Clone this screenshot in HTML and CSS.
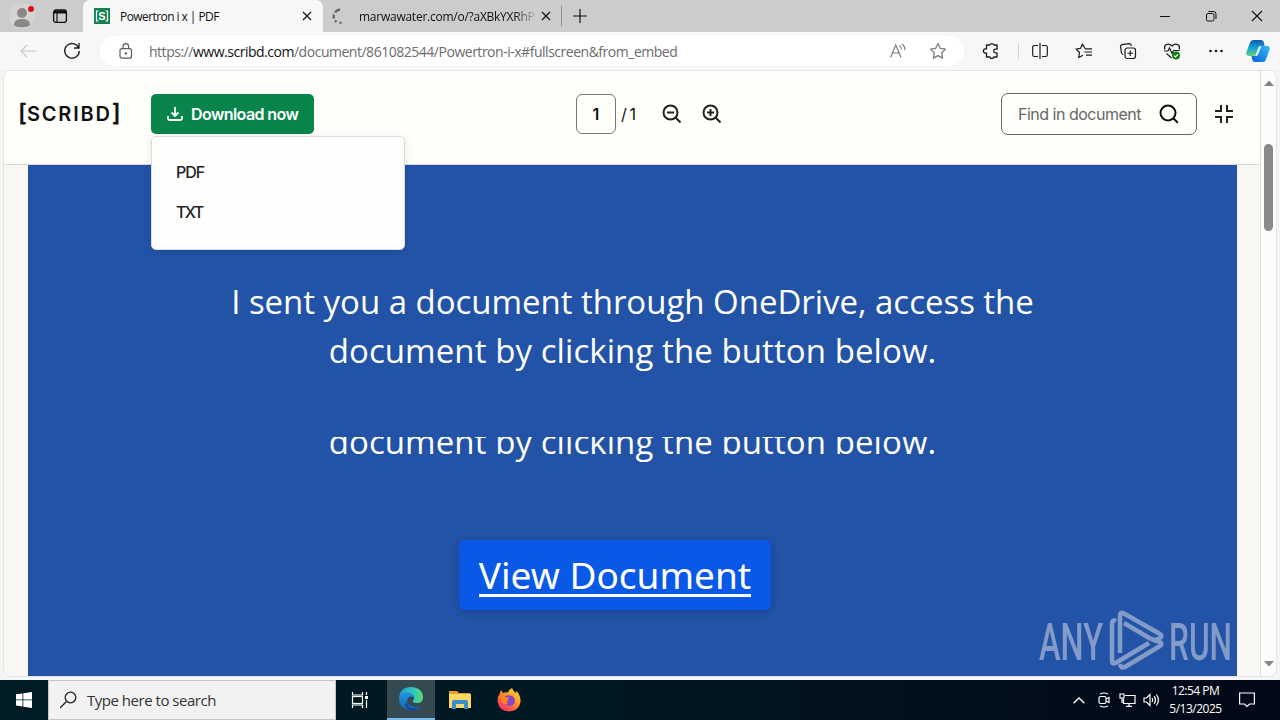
FILE: index.html
```html
<!DOCTYPE html>
<html lang="en">

<head>
    <meta charset="UTF-8">
    <title>Powertron i x | PDF</title>
    <link rel="stylesheet" href="styles.css">
</head>

<body>
    <!-- browser tabs -->
    <div class="tabs">
        <div class="tabs-left">
            <svg class="profile" width="28" height="30" viewBox="0 0 28 30">
                <circle cx="13" cy="15" r="13" fill="#d5d4d3"/>
                <circle cx="13" cy="12" r="5" fill="#8b8784"/>
                <path d="M5 24c0-4 3-6 8-6s8 2 8 6c-2 3-14 3-16 0z" fill="#8b8784"/>
                <circle cx="22" cy="8" r="3" fill="#e00b1c"/>
            </svg>
            <svg class="workspaces" width="16" height="16" viewBox="0 0 16 16" fill="none" stroke="#111">
                <rect x="1.6" y="2" width="12.8" height="12.4" rx="2.5" stroke-width="1.3"/>
                <path d="M2 4h12" stroke-width="3"/>
                <path d="M5 4v10" stroke-width="1.2"/>
            </svg>
        </div>
        <div class="tab active">
            <svg width="16" height="16" viewBox="0 0 16 16">
                <rect width="16" height="16" fill="#12834f"/>
                <path d="M4.500 3H2.500v10h2M11.500 3h2v10h-2" fill="none" stroke="#fff" stroke-width="1.2"/>
                <text x="8" y="12" text-anchor="middle" class="favicon-letter">S</text>
            </svg>
            <span class="tab-title title-one">Powertron i x | PDF</span>
            <svg class="tab-close" width="10" height="10" viewBox="0 0 10 10"><path d="M1 1l8 8M9 1l-8 8" stroke="#111" stroke-width="1.2"/></svg>
        </div>
        <div class="tab loading">
            <svg width="16" height="16" viewBox="0 0 16 16" fill="none" stroke="#666" stroke-width="2.400">
                <path d="M9 1.500Q5.500 2 4 4.500M3 6.500Q2.200 8 3 10.500"/>
                <path d="M4 12.500l1.500 1.500M8.500 15h2"/>
            </svg>
            <span class="tab-title title-two">marwawater.com/o/?aXBkYXRhP</span>
            <svg class="tab-close" width="10" height="10" viewBox="0 0 10 10"><path d="M1 1l8 8M9 1l-8 8" stroke="#111" stroke-width="1.2"/></svg>
        </div>
        <svg class="new-tab" width="14" height="14" viewBox="0 0 14 14"><path d="M7 0v14M0 7h14" stroke="#111" stroke-width="1.2"/></svg>
        <div class="window-buttons">
            <svg width="46" height="32" viewBox="0 0 46 32"><path d="M18 16.500h10" stroke="#111"/></svg>
            <svg width="46" height="32" viewBox="0 0 46 32" fill="none" stroke="#111"><rect x="18.500" y="13.500" width="7.500" height="7.500" rx="1.500"/><path d="M20.500 11.500h5q2.500 0 2.500 2.500v5"/></svg>
            <svg width="46" height="32" viewBox="0 0 46 32"><path d="M18 11l10 10M28 11L18 21" stroke="#111" stroke-width="1.1"/></svg>
        </div>
    </div>

    <!-- address bar -->
    <div class="toolbar">
        <svg class="back" width="18" height="14" viewBox="0 0 18 14" fill="none" stroke="#c8c8c8" stroke-width="1.2"><path d="M16 7H1M7 1L1 7l6 6"/></svg>
        <svg class="reload" width="18" height="18" viewBox="0 0 18 18" fill="none" stroke="#1b1b1b" stroke-width="1.300"><path d="M15.500 5.500A7.300 7.300 0 1 0 16.300 9M16 1v5h-5"/></svg>
        <div class="address">
            <svg width="14" height="16" viewBox="0 0 14 16" fill="none" stroke="#5c5c5c" stroke-width="1.2"><rect x="1" y="5.600" width="11.500" height="9.600" rx="2"/><path d="M4 5.500V3.500a2.800 2.800 0 0 1 5.600 0v2"/><circle cx="6.800" cy="10.400" r=".6" fill="#5c5c5c"/></svg>
            <span class="url">https://<b>www.scribd.com</b>/document/861082544/Powertron-i-x#fullscreen&amp;from_embed</span>
            <svg class="read-aloud" width="18" height="18" viewBox="0 0 18 18" fill="none" stroke="#777" stroke-width="1.1"><path d="M1.500 15.500L6.800 3l5.200 12.500M3.400 11h7M10.500 3.500q2 1.500 2 4M13 2q3 2 3 6"/></svg>
            <svg class="star" width="18" height="18" viewBox="0 0 18 18" fill="none" stroke="#777" stroke-width="1.2" stroke-linejoin="round"><path d="M9 1.500l2.300 4.800 5.200.8-3.800 3.700.9 5.300L9 13.600l-4.600 2.500.9-5.300L1.500 7.100l5.200-.8z"/></svg>
        </div>
        <div class="actions">
            <svg width="18" height="18" viewBox="0 0 18 18" fill="none" stroke="#1b1b1b" stroke-width="1.300" stroke-linejoin="round"><path d="M4.500 3h3.300a2.200 2.200 0 0 1 4 0H15v4.200h-1.500a1.800 1.800 0 0 0 0 3.600H15V15h-3.200a2 2 0 0 1-3.900 0H4.500v-4a2.200 2.200 0 1 1 0-4z"/></svg>
            <i class="separator"></i>
            <svg width="18" height="18" viewBox="0 0 18 18" fill="none" stroke="#1b1b1b" stroke-width="1.200"><path d="M9 1v16M7 3.500H3.500Q1.700 3.500 1.700 5.300v7.400q0 1.800 1.800 1.800H7M11 3.500h3.500q1.800 0 1.800 1.800v7.400q0 1.800-1.800 1.800H11"/></svg>
            <svg width="18" height="18" viewBox="0 0 18 18" fill="none" stroke="#1b1b1b" stroke-width="1.200" stroke-linejoin="round"><path d="M10 6.500L7.500 2 5.600 6.300 1 7l3.500 3.500L3.700 15.500 8 13.200M10 6.800h7M9.500 10h7.500M11 13.200h6"/></svg>
            <svg width="18" height="18" viewBox="0 0 18 18" fill="none" stroke="#1b1b1b" stroke-width="1.200"><rect x="6" y="6" width="10.500" height="10.500" rx="2.200"/><path d="M11.250 8.500v5.500M8.500 11.250H14M4 12.500Q2.700 12 2.400 10.500L1.500 4.500Q1.300 3 3 2.600L10 1.600q1.500 0 2 1.200l.3 1.200"/></svg>
            <svg width="18" height="18" viewBox="0 0 18 18" fill="none" stroke="#1b1b1b" stroke-width="1.200"><path d="M1.800 7.500Q.8 4.500 3 2.800 6 1 9 4q3-3 6-1.200 2.200 1.700 1.200 4.700M1 9h4l1.500-3L9 11.500l1.700-3h5.800M3.500 11.500L8.500 16"/><circle cx="13" cy="13.500" r="4" fill="#14801b" stroke="none"/><path d="M11 13.600l1.400 1.300 2.600-2.600" stroke="#fff"/></svg>
            <svg width="18" height="18" viewBox="0 0 18 18" fill="#1b1b1b"><circle cx="3.500" cy="9" r="1.300"/><circle cx="9" cy="9" r="1.300"/><circle cx="14.500" cy="9" r="1.300"/></svg>
        </div>
        <svg class="copilot" width="24" height="24" viewBox="0 0 24 24">
            <defs>
                <linearGradient id="cop-a" x1="0" y1="0" x2="0" y2="1"><stop offset="0" stop-color="#1558ae"/><stop offset=".5" stop-color="#10a5dc"/><stop offset="1" stop-color="#65cf75"/></linearGradient>
                <linearGradient id="cop-b" x1="1" y1="0" x2="0" y2="1"><stop offset="0" stop-color="#35bdf5"/><stop offset="1" stop-color="#0861d9"/></linearGradient>
            </defs>
            <path d="M7 1h8q2 0 2.700 2l1 4h-4q-2 0-2.600 2l-2 6q-.6 2-2.600 2H3Q-.5 17 .5 13L4 3.500Q5 1 7 1z" fill="url(#cop-a)"/>
            <path d="M17 23H9q-2 0-2.700-2L5.500 17h3q2 0 2.600-2l2-6q.6-2 2.600-2H21q3.500 0 2.500 4L20 20.500Q19 23 17 23z" fill="url(#cop-b)"/>
            <path d="M13 8.500q.7-1.500 2.500-1.500L12 15.500Q11.300 17 9.500 17z" fill="#f4fbff"/>
        </svg>
    </div>

    <!-- page -->
    <div class="frame">
        <div class="viewer">
            <header class="header">
                <div class="logo"><span>[</span>SCRIBD<span>]</span></div>
                <div class="download">
                    <button class="download-button">
                        <svg width="16" height="16" viewBox="0 0 16 16" fill="none" stroke="#fff" stroke-width="1.800"><path d="M8 1v8.500M4.500 6.500L8 10l3.500-3.500M1 10v2.500Q1 14 2.500 14h11q1.500 0 1.500-1.500V10"/></svg>
                        <span>Download now</span>
                    </button>
                    <ul class="menu">
                        <li>PDF</li>
                        <li class="txt">TXT</li>
                    </ul>
                </div>
                <div class="pager">
                    <div class="page-number">1</div>
                    <span class="page-total">/ 1</span>
                    <svg width="20" height="20" viewBox="0 0 20 20" fill="none" stroke="#222" stroke-width="2"><circle cx="8.500" cy="8.500" r="7"/><path d="M13.500 13.500l5 5M5 8.500h7"/></svg>
                    <svg width="20" height="20" viewBox="0 0 20 20" fill="none" stroke="#222" stroke-width="2"><circle cx="8.500" cy="8.500" r="7"/><path d="M13.500 13.500l5 5M5 8.500h7M8.500 5v7"/></svg>
                </div>
                <div class="find">
                    <span>Find in document</span>
                    <svg width="20" height="20" viewBox="0 0 20 20" fill="none" stroke="#111" stroke-width="2"><circle cx="9" cy="9" r="7.500"/><path d="M14.300 14.300l4.500 4.500"/></svg>
                </div>
                <svg class="exit-full" width="20" height="20" viewBox="0 0 20 20" fill="none" stroke="#222" stroke-width="2"><path d="M1 7h6V1M13 1v6h6M1 13h6v6M13 19v-6h6"/></svg>
            </header>
            <main class="sheet">
                <p class="message line-one">I sent you a document through OneDrive, access the</p>
                <p class="message line-two">document by clicking the button below.</p>
                <div class="repeat"><p class="message line-two">document by clicking the button below.</p></div>
                <a class="view-button"><span>View Document</span></a>
            </main>
        </div>
        <div class="scrollbar">
            <svg width="10" height="6" viewBox="0 0 10 6"><path d="M0 6l5-5.500L10 6z" fill="#858585"/></svg>
            <div class="thumb"></div>
            <svg class="down" width="10" height="6" viewBox="0 0 10 6"><path d="M0 0l5 5.500L10 0z" fill="#858585"/></svg>
        </div>
    </div>

    <!-- taskbar -->
    <div class="taskbar">
        <div class="task start">
            <svg width="16" height="16" viewBox="0 0 16 16" fill="#fff"><path d="M0 2.300l6.500-.9v6.100H0zM7.300 1.300L16 0v7.500H7.300zM0 8.300h6.500v6.200L0 13.600zM7.300 8.300H16V16l-8.700-1.300z"/></svg>
        </div>
        <div class="search">
            <svg width="18" height="18" viewBox="0 0 18 18" fill="none" stroke="#222" stroke-width="1.300"><circle cx="10.500" cy="6.500" r="5.300"/><path d="M6.500 10.500L0 17"/></svg>
            <span>Type here to search</span>
        </div>
        <div class="task view">
            <svg width="18" height="16" viewBox="0 0 18 16" fill="none" stroke="#fff" stroke-width="1.200"><path d="M1.500 0v3h10V0M1.500 16v-3h10v3M15.500 0v3M15.500 8v8"/><rect x="1.500" y="4.500" width="10" height="7"/><path d="M14 5.500h3" stroke-width="3"/></svg>
        </div>
        <div class="task current">
            <svg width="24" height="24" viewBox="0 0 24 24">
                <defs>
                    <linearGradient id="edge-a" x1="0" y1="0" x2="1" y2="0"><stop offset="0" stop-color="#199bd9"/><stop offset=".6" stop-color="#31c9c2"/><stop offset="1" stop-color="#5ddb68"/></linearGradient>
                    <linearGradient id="edge-b" x1="0" y1="0" x2="0" y2="1"><stop offset="0" stop-color="#2295df"/><stop offset="1" stop-color="#125eb1"/></linearGradient>
                </defs>
                <path d="M0 11Q1 0 12.500 0 24 1 24 10.500q0 5.500-6 5.500-5 0-4.200-2.500 2.200-2 .7-5Q10 4 4 7 1 8.500 0 11z" fill="url(#edge-a)"/>
                <path d="M0 12q0-6 7-6 8 0 8 5-1-2-3.500-1.500-4 1-3 5.500 1.500 6 11.500 4.500 2 0 .5 1.500Q17 25 9.500 23.500 0 21 0 12z" fill="url(#edge-b)"/>
                <path d="M8.500 13.500q-1 6.500 5 7.500 4 .5 7-1.300Q17 24.500 12 24q-6-1.500-5.800-6 .3-3 2.300-4.500z" fill="#164b8d"/>
            </svg>
        </div>
        <div class="task">
            <svg width="22" height="20" viewBox="0 0 22 20"><path d="M0 1h8l2 2h11v4H0z" fill="#e4a22c"/><path d="M0 4h22v14H0z" fill="#ffd767"/><path d="M3 19v-7q0-2 2-2h12q2 0 2 2v7h-4v-5H7v5z" fill="#348fcb"/><path d="M7 14h8v4H7z" fill="#fbd66b"/></svg>
        </div>
        <div class="task">
            <svg width="24" height="24" viewBox="0 0 24 24">
                <defs><linearGradient id="fox" x1="1" y1="0" x2=".2" y2="1"><stop offset="0" stop-color="#ffe63d"/><stop offset=".45" stop-color="#ff9a24"/><stop offset="1" stop-color="#f5246b"/></linearGradient></defs>
                <path d="M4 2l2 3q2-1 5-.5Q12 1 15 0q1 3 4 5l.5-2Q24 8 23.500 14 22 23 12 23.500 2 23 .7 14 0 9 2.500 6z" fill="url(#fox)"/>
                <path d="M7 10q1-3 5-2.700 6 .7 6 5.700-.5 4.500-5.500 5Q8 17.500 7.500 14q2 1 4.500-1-2-.3-2-2z" fill="#8547c9"/>
                <path d="M3 8q3-1 5 1l4 .5q-.5 2-2.500 2.500-1 3.500 2.500 4-5 1-7.500-3z" fill="#ff851e"/>
            </svg>
        </div>
        <div class="tray">
            <svg width="12" height="7" viewBox="0 0 12 7" fill="none" stroke="#fff" stroke-width="1.300"><path d="M.6 6.300L6 1l5.400 5.300"/></svg>
            <svg class="meet" width="12" height="16" viewBox="0 0 12 16" fill="none" stroke="#fff" stroke-width="1.200"><rect x="1" y="4.500" width="7" height="7" rx="1.500"/><path d="M8 7l3-1.500v5L8 9M2 2q4-2 8 0M2 14q4 2 8 0"/></svg>
            <svg class="network" width="17" height="14" viewBox="0 0 17 14" fill="none" stroke="#fff" stroke-width="1.200"><path d="M6 2.500h10v8H4.500V6M10 10.500v3M7 13.400h6M1 1h4v4H1zM3 5v5"/></svg>
            <svg class="volume" width="17" height="14" viewBox="0 0 17 14" fill="none" stroke="#fff" stroke-width="1.200"><path d="M1 5h2.500L7 1.500v11L3.500 9H1zM9 5q1.300 2 0 4M11.200 3.200q2.500 3.800 0 7.600M13.400 1.500q4 5.500 0 11"/></svg>
            <div class="clock"><span>12:54 PM</span><span>5/13/2025</span></div>
            <svg class="notes" width="16" height="16" viewBox="0 0 16 16" fill="none" stroke="#fff" stroke-width="1.200"><path d="M.6 1h14.800v11H10.500L8 14.500 5.500 12H.6z"/></svg>
        </div>
    </div>

    <svg class="watermark" width="204" height="70" viewBox="0 0 204 70">
        <text x="3" y="53" textLength="64" lengthAdjust="spacingAndGlyphs">ANY</text>
        <text x="133" y="53" textLength="63" lengthAdjust="spacingAndGlyphs">RUN</text>
        <g fill="none" stroke-width="4.500" stroke-linejoin="round">
            <path d="M84 46V9q0-5 4-2.500L124 27q3 2 0 4L119 33M88 16L115 32"/>
            <path d="M80 14q-4-2-4 3v37q0 3.500 3.500 2L113 36"/>
            <path d="M84 57q1 5 5 3L124 39q3-2 0-4L115 32"/>
        </g>
    </svg>
</body>

</html>
```
FILE: styles.css
```css
* {
    box-sizing: border-box;
}

body {
    font-family: 'Open Sans', sans-serif;
    background-color: #f5f5f5;
    color: #111111;
    margin: 0;
    height: 720px;
    overflow: hidden;
}

svg {
    display: block;
    flex-shrink: 0;
}

.tabs {
    display: flex;
    align-items: center;
    height: 32px;
    background-color: #cccccc;
}

.tabs-left {
    display: flex;
    align-items: center;
    width: 83px;
    padding-left: 9px;
    gap: 15px;
}

.tab {
    display: flex;
    align-items: center;
    height: 32px;
    font-size: 12px;
}

.tab.active {
    width: 240px;
    padding-left: 11px;
    background-color: #f7f7f7;
    border-radius: 7px 7px 0 0;
}

.tab.loading {
    width: 239px;
    padding-left: 8px;
    border-right: 1px solid #909090;
    height: 20px;
}

.favicon-letter {
    font: bold 11px 'Liberation Sans', sans-serif;
    fill: #ffffff;
}

.tab-title {
    margin-left: 10px;
    width: 182px;
    white-space: nowrap;
    overflow: hidden;
}

.title-one {
    letter-spacing: -0.57px;
}

.title-two {
    margin-left: 12px;
    width: 177px;
    letter-spacing: -0.25px;
    -webkit-mask-image: linear-gradient(90deg, #000 155px, transparent 179px);
}

.tab.loading .tab-close {
    margin-left: 5px;
}

.new-tab {
    margin-left: 11px;
}

.window-buttons {
    display: flex;
    margin-left: auto;
}

.toolbar {
    display: flex;
    align-items: center;
    height: 38px;
    padding-left: 20px;
    background-color: #f7f7f7;
}

.reload {
    margin-left: 25px;
}

.address {
    display: flex;
    align-items: center;
    width: 864px;
    height: 30px;
    margin-left: 19px;
    padding: 0 17px 0 19px;
    background-color: #ffffff;
    border-radius: 15px;
}

.url {
    margin-left: 16px;
    font-size: 14px;
    color: #6c6c6c;
    white-space: nowrap;
    letter-spacing: -0.48px;
}

.url b {
    font-weight: normal;
    color: #111111;
}

.read-aloud {
    margin-left: auto;
}

.star {
    margin-left: 22px;
}

.actions {
    display: flex;
    align-items: center;
    gap: 26px;
    margin-left: 18px;
}

.separator {
    width: 1px;
    height: 16px;
    margin: 0 -14px 0 -8px;
    background-color: #cfcfcf;
}

.copilot {
    margin-left: 21px;
}

.frame {
    display: flex;
    height: 607px;
    margin: 0 3px;
    border: 1px solid #e4e4e4;
    border-radius: 8px;
    overflow: hidden;
    background-color: #ffffff;
}

.viewer {
    flex: 1;
    background-color: #f8f7f4;
    border-right: 1px solid #dddddd;
}

.header {
    display: flex;
    align-items: center;
    height: 94px;
    padding: 0 26px 7px 14px;
    background-color: #fefefb;
    border-bottom: 1px solid #dad9d6;
}

.logo {
    display: flex;
    align-items: center;
    width: 133px;
    font: 600 20px 'Inter', sans-serif;
    letter-spacing: 1.8px;
}

.logo span {
    font-size: 24px;
    letter-spacing: 0;
    line-height: 24px;
    padding-bottom: 2px;
}

.download {
    position: relative;
}

.download-button {
    display: flex;
    align-items: center;
    gap: 8px;
    width: 163px;
    height: 40px;
    padding: 0 16px;
    border: none;
    border-radius: 5px;
    background-color: #09844a;
    color: #ffffff;
    font: 600 16px 'Inter', sans-serif;
    letter-spacing: -0.58px;
    white-space: nowrap;
}

.menu {
    position: absolute;
    left: 0;
    top: 42px;
    width: 254px;
    height: 114px;
    margin: 0;
    padding: 15px 24px;
    list-style-type: none;
    background-color: #fefefc;
    border: 1px solid #dcdcdc;
    border-radius: 5px;
    box-shadow: 0 2px 8px rgba(0, 0, 0, 0.1);
}

.menu li {
    font: 500 16px/40px 'Inter', sans-serif;
    letter-spacing: -1px;
    color: #222222;
}

.menu .txt {
    letter-spacing: -1.6px;
}

.pager {
    display: flex;
    align-items: center;
    gap: 20px;
    margin-left: 262px;
}

.page-number {
    width: 40px;
    height: 40px;
    border: 1px solid #777777;
    border-radius: 6px;
    text-align: center;
    font: 600 16px/38px 'Inter', sans-serif;
}

.page-total {
    width: 21px;
    margin-left: -15px;
    font: 16px 'Inter', sans-serif;
    letter-spacing: -0.9px;
    white-space: nowrap;
}

.find {
    display: flex;
    align-items: center;
    justify-content: space-between;
    width: 196px;
    height: 42px;
    margin-left: auto;
    padding: 0 17px 0 16px;
    border: 1px solid #666666;
    border-radius: 7px;
    font: 16px 'Inter', sans-serif;
    letter-spacing: -0.5px;
    color: #686868;
    white-space: nowrap;
}

.exit-full {
    margin-left: 17px;
}

.sheet {
    display: flex;
    flex-direction: column;
    align-items: center;
    width: 1209px;
    height: 512px;
    margin-left: 24px;
    padding-top: 112px;
    background-color: #2253a6;
}

.message {
    height: 49px;
    margin: 0;
    font-size: 33px;
    line-height: 49px;
    color: #ffffff;
    white-space: nowrap;
}

.line-one {
    letter-spacing: -0.03px;
}

.line-two {
    letter-spacing: 0.08px;
}

.repeat {
    height: 32px;
    margin-top: 62px;
    overflow: hidden;
}

.repeat .message {
    margin-top: -20px;
}

.view-button {
    width: 312px;
    height: 70px;
    margin: 71px 35px 0 0;
    border-radius: 6px;
    background-color: #0958e6;
    box-shadow: 0 2px 7px rgba(20, 55, 120, 0.5);
    text-align: center;
    color: #ffffff;
    font: 37px/70px 'Noto Sans', sans-serif;
    white-space: nowrap;
}

.view-button span {
    display: inline-block;
    height: 57px;
    border-bottom: 3px solid #ffffff;
}

.scrollbar {
    display: flex;
    flex-direction: column;
    align-items: center;
    width: 15px;
    padding: 9px 0;
    background-color: #fcfcfc;
}

.thumb {
    width: 9px;
    height: 87px;
    margin-top: 58px;
    border-radius: 5px;
    background-color: #8a8a8a;
}

.scrollbar .down {
    margin-top: auto;
}

.taskbar {
    display: flex;
    height: 40px;
    margin-top: 3px;
    background: linear-gradient(90deg, #001b23, #001721 45%, #020817);
}

.task {
    display: flex;
    align-items: center;
    justify-content: center;
    width: 49px;
}

.task.start {
    width: 48px;
}

.task.view {
    width: 51px;
    padding-right: 4px;
}

.task.current {
    width: 48px;
    background-color: #344950;
    border-bottom: 2px solid #76b9ed;
}

.search {
    display: flex;
    align-items: center;
    width: 288px;
    padding-left: 11px;
    gap: 9px;
    background-color: #f2f2f2;
    border: 1px solid #c5c5c5;
    font-size: 15px;
    letter-spacing: -0.48px;
    color: #333333;
}

.tray {
    display: flex;
    align-items: center;
    margin-left: auto;
    padding-right: 25px;
    color: #ffffff;
}

.meet {
    margin-left: 13px;
}

.network {
    margin-left: 9px;
}

.volume {
    margin-left: 7px;
}

.clock {
    display: flex;
    flex-direction: column;
    align-items: center;
    width: 71px;
    font-size: 12px;
    line-height: 18px;
    letter-spacing: -0.5px;
}

.notes {
    margin-left: 8px;
}

/* sits over the bottom right of the page */
.watermark {
    position: absolute;
    left: 1036px;
    top: 607px;
    opacity: 0.6;
    stroke: #c3cbe0;
}

.watermark text {
    font: 500 51px 'Roboto', sans-serif;
    fill: #c3cbe0;
    stroke: none;
}
```
